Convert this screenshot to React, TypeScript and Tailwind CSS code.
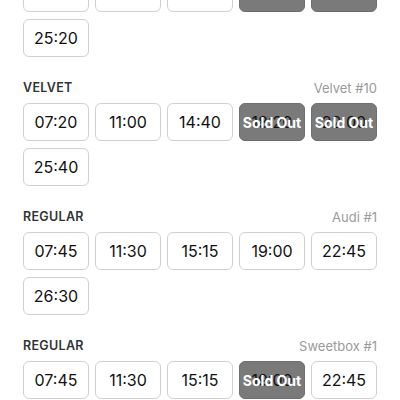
import React from "react";

type Slot = { time: string; soldOut?: boolean };
type Section = { type: string; screen: string; slots: Slot[] };

const sections: Section[] = [
  {
    type: "VELVET",
    screen: "Velvet #9",
    slots: [
      { time: "07:00" },
      { time: "10:40" },
      { time: "14:20" },
      { time: "18:00", soldOut: true },
      { time: "21:40", soldOut: true },
      { time: "25:20" },
    ],
  },
  {
    type: "VELVET",
    screen: "Velvet #10",
    slots: [
      { time: "07:20" },
      { time: "11:00" },
      { time: "14:40" },
      { time: "18:20", soldOut: true },
      { time: "22:00", soldOut: true },
      { time: "25:40" },
    ],
  },
  {
    type: "REGULAR",
    screen: "Audi #1",
    slots: [
      { time: "07:45" },
      { time: "11:30" },
      { time: "15:15" },
      { time: "19:00" },
      { time: "22:45" },
      { time: "26:30" },
    ],
  },
  {
    type: "REGULAR",
    screen: "Sweetbox #1",
    slots: [
      { time: "07:45" },
      { time: "11:30" },
      { time: "15:15" },
      { time: "19:00", soldOut: true },
      { time: "22:45" },
      { time: "26:30" },
    ],
  },
];

function TimeButton({ slot }: { slot: Slot }) {
  if (slot.soldOut) {
    return (
      <div className="relative h-[38px] rounded-[6px] border border-[#6e6e6e] bg-[#7a7a7a] flex items-center justify-center">
        <span className="text-[16px] text-[#111]">{slot.time}</span>
        <span className="absolute inset-0 flex items-center justify-center text-[14px] font-bold text-white">
          Sold Out
        </span>
      </div>
    );
  }
  return (
    <div className="h-[38px] rounded-[6px] border border-[#d0d0d0] bg-white flex items-center justify-center text-[16px] text-[#111]">
      {slot.time}
    </div>
  );
}

export default function App() {
  return (
    <div className="w-[400px] h-[400px] overflow-hidden bg-white font-['Inter','Liberation_Sans',sans-serif]">
      <div className="px-[23px] -mt-[49px]">
        {sections.map((s, i) => (
          <div key={i} className="mb-[23px]">
            <div className="h-4 mb-[7px] flex items-center justify-between leading-4">
              <span className="text-[12.5px] font-semibold tracking-wide text-[#333]">{s.type}</span>
              <span className="text-[13px] text-[#9a9a9a]">{s.screen}</span>
            </div>
            <div className="grid grid-cols-5 gap-x-[6px] gap-y-[7px]">
              {s.slots.map((slot, j) => (
                <TimeButton key={j} slot={slot} />
              ))}
            </div>
          </div>
        ))}
      </div>
    </div>
  );
}
